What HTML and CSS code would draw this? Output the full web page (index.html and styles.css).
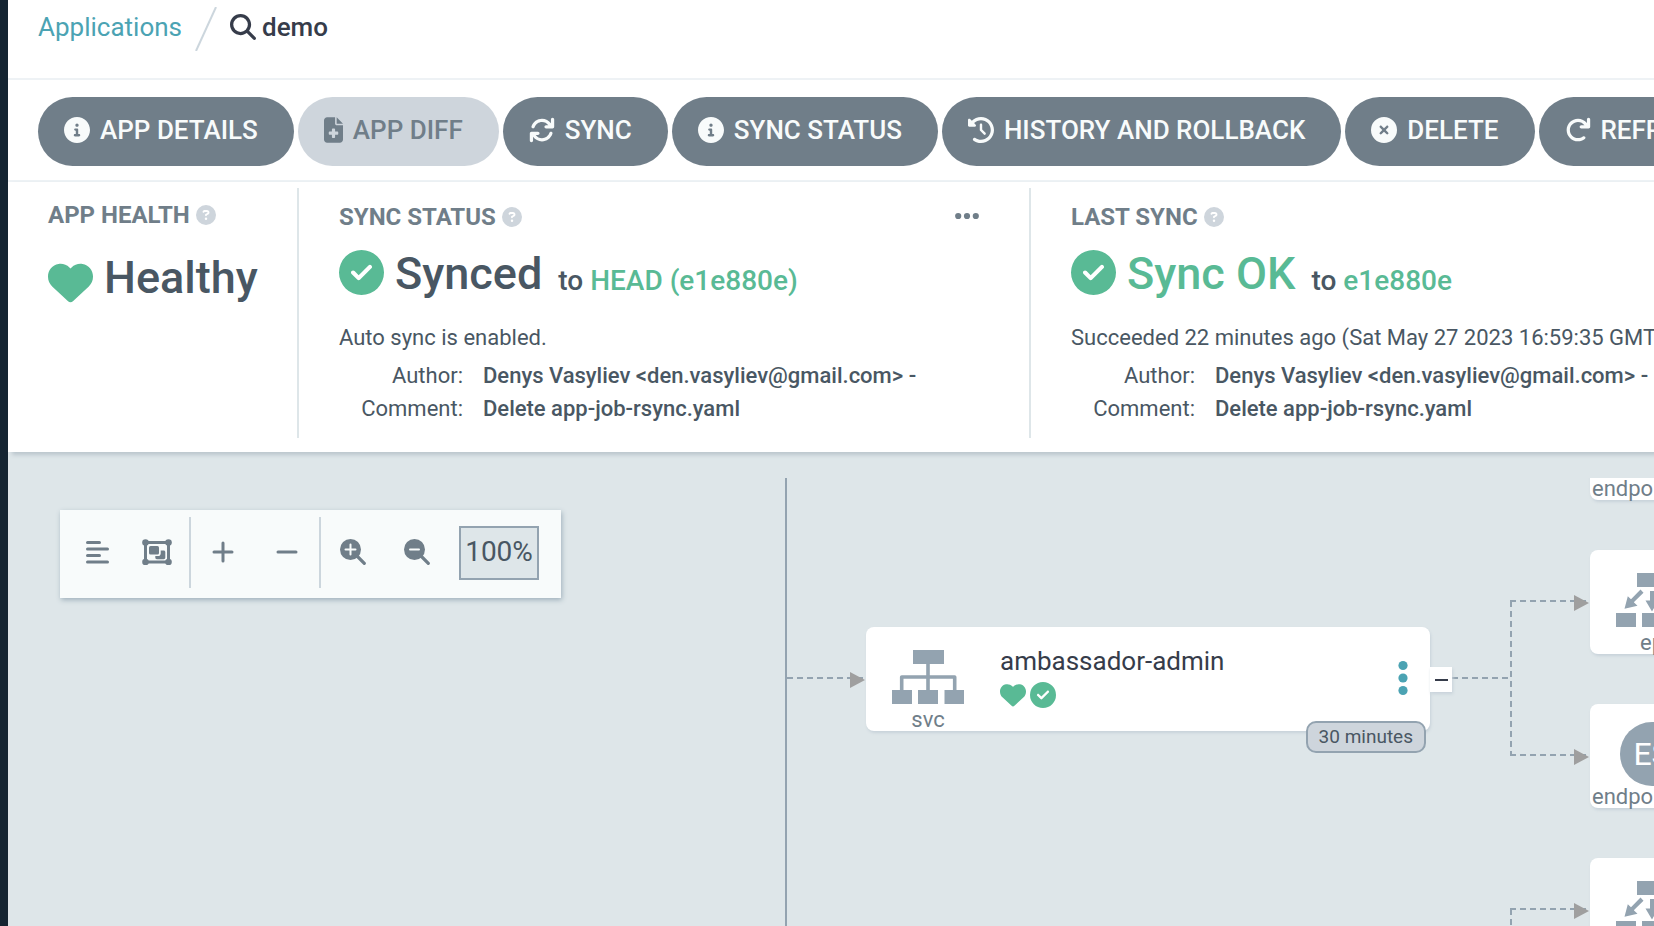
FILE: index.html
```html
<!DOCTYPE html>
<html lang="en">
<head>
<meta charset="utf-8">
<title>demo - Applications</title>
<link rel="stylesheet" href="styles.css">
</head>
<body>
<svg class="defs" aria-hidden="true">
  <symbol id="i-info" viewBox="0 0 512 512"><path d="M256 0C114.6 0 0 114.6 0 256s114.6 256 256 256s256-114.6 256-256S397.4 0 256 0zM256 128c17.67 0 32 14.33 32 32c0 17.67-14.33 32-32 32S224 177.7 224 160C224 142.3 238.3 128 256 128zM296 384h-80C202.8 384 192 373.3 192 360s10.75-24 24-24h16v-64H224c-13.25 0-24-10.75-24-24S210.8 224 224 224h32c13.25 0 24 10.75 24 24v88h16c13.25 0 24 10.75 24 24S309.3 384 296 384z"/></symbol>
  <symbol id="i-file" viewBox="0 0 384 512"><path fill-rule="evenodd" d="M64 0C28.7 0 0 28.7 0 64V448c0 35.3 28.7 64 64 64H320c35.3 0 64-28.7 64-64V160H256c-17.7 0-32-14.3-32-32V0H64zM256 0V128H384L256 0zM160 240c0-8.8 7.2-16 16-16h32c8.8 0 16 7.2 16 16v48h48c8.8 0 16 7.2 16 16v32c0 8.8-7.2 16-16 16H224v48c0 8.8-7.2 16-16 16H176c-8.8 0-16-7.2-16-16V352H112c-8.8 0-16-7.2-16-16V304c0-8.8 7.2-16 16-16h48V240z"/></symbol>
  <symbol id="i-sync" viewBox="0 0 512 512"><path d="M464 16c-17.67 0-32 14.31-32 32v74.09C392.1 66.52 327.4 32 256 32C161.5 32 78.59 92.34 49.58 182.2c-5.438 16.81 3.797 34.88 20.61 40.28c16.89 5.5 34.88-3.812 40.3-20.59C130.9 138.5 189.4 96 256 96c50.5 0 96.26 24.55 124.4 64H336c-17.67 0-32 14.31-32 32s14.33 32 32 32h128c17.67 0 32-14.31 32-32V48C496 30.31 481.7 16 464 16zM441.8 289.6c-16.92-5.438-34.88 3.812-40.3 20.59C381.1 373.5 322.6 416 256 416c-50.5 0-96.25-24.55-124.4-64H176c17.67 0 32-14.31 32-32s-14.33-32-32-32h-128c-17.67 0-32 14.31-32 32v144c0 17.69 14.33 32 32 32s32-14.31 32-32v-74.09C119.9 445.5 184.6 480 255.1 480c94.45 0 177.4-60.34 206.4-150.2C467.9 313 458.6 294.1 441.8 289.6z"/></symbol>
  <symbol id="i-history" viewBox="0 0 512 512"><path d="M75 75L41 41C25.9 25.9 0 36.6 0 57.9V168c0 13.3 10.7 24 24 24H134.1c21.4 0 32.1-25.9 17-41l-30.8-30.8C155 85.5 203 64 256 64c106 0 192 86 192 192s-86 192-192 192c-40.8 0-78.6-12.7-109.7-34.4c-14.5-10.1-34.4-6.6-44.6 7.9s-6.6 34.4 7.9 44.6C151.2 495 201.7 512 256 512c141.4 0 256-114.6 256-256S397.4 0 256 0C185.3 0 121.3 28.7 75 75zm181 53c-13.3 0-24 10.7-24 24V256c0 6.4 2.5 12.5 7 17l72 72c9.4 9.4 24.6 9.4 33.9 0s9.4-24.6 0-33.9l-65-65V152c0-13.3-10.7-24-24-24z"/></symbol>
  <symbol id="i-xmark" viewBox="0 0 512 512"><path d="M256 512A256 256 0 1 0 256 0a256 256 0 1 0 0 512zM175 175c9.4-9.4 24.6-9.4 33.9 0l47 47 47-47c9.4-9.4 24.6-9.4 33.9 0s9.4 24.6 0 33.9l-47 47 47 47c9.4 9.4 9.4 24.6 0 33.9s-24.6 9.4-33.9 0l-47-47-47 47c-9.4 9.4-24.6 9.4-33.9 0s-9.4-24.6 0-33.9l47-47-47-47c-9.4-9.4-9.4-24.6 0-33.9z"/></symbol>
  <symbol id="i-redo" viewBox="0 0 512 512"><path d="M496 48V192c0 17.69-14.31 32-32 32H320c-17.69 0-32-14.31-32-32s14.31-32 32-32h63.39c-29.97-39.7-77.25-63.78-127.6-63.78C167.7 96.22 96 167.9 96 256s71.69 159.8 159.8 159.8c34.88 0 68.03-11.03 95.88-31.94c14.22-10.53 34.22-7.75 44.81 6.375c10.59 14.16 7.75 34.22-6.375 44.81c-39.03 29.28-85.36 44.86-134.2 44.86C132.5 479.9 32 379.4 32 256s100.5-223.9 223.9-223.9c69.15 0 134 32.47 176.1 86.12V48c0-17.69 14.31-32 32-32S496 30.31 496 48z"/></symbol>
  <symbol id="i-search" viewBox="0 0 512 512"><path d="M416 208c0 45.9-14.9 88.3-40 122.7L502.6 457.4c12.5 12.5 12.5 32.8 0 45.3s-32.8 12.5-45.3 0L330.7 376c-34.4 25.2-76.8 40-122.7 40C93.1 416 0 322.9 0 208S93.1 0 208 0S416 93.1 416 208zM208 352a144 144 0 1 0 0-288 144 144 0 1 0 0 288z"/></symbol>
  <symbol id="i-question" viewBox="0 0 512 512"><path d="M256 512A256 256 0 1 0 256 0a256 256 0 1 0 0 512zM169.8 165.3c7.9-22.3 29.1-37.3 52.8-37.3h58.3c34.9 0 63.1 28.3 63.1 63.1c0 22.6-12.1 43.5-31.7 54.8L280 264.4c-.2 13-10.9 23.6-24 23.6c-13.3 0-24-10.7-24-24V250.5c0-8.6 4.6-16.5 12.1-20.8l44.3-25.4c4.7-2.7 7.6-7.7 7.6-13.1c0-8.4-6.8-15.1-15.1-15.1H222.6c-3.4 0-6.4 2.1-7.5 5.3l-.4 1.2c-4.4 12.5-18.2 19-30.6 14.6s-19-18.2-14.6-30.6l.4-1.2zM224 352a32 32 0 1 1 64 0 32 32 0 1 1 -64 0z"/></symbol>
  <symbol id="i-check" viewBox="0 0 512 512"><path d="M256 512A256 256 0 1 0 256 0a256 256 0 1 0 0 512zM369 209L241 337c-9.4 9.4-24.6 9.4-33.9 0l-64-64c-9.4-9.4-9.4-24.6 0-33.9s24.6-9.4 33.9 0l47 47L335 175c9.4-9.4 24.6-9.4 33.9 0s9.4 24.6 0 33.9z"/></symbol>
  <symbol id="i-heart" viewBox="0 0 512 512"><path d="M47.6 300.4L228.3 469.1c7.5 7 17.4 10.9 27.7 10.9s20.2-3.9 27.7-10.9L464.4 300.4c30.4-28.3 47.6-68 47.6-109.5v-5.8c0-69.9-50.5-129.5-119.4-141C347 36.5 300.6 51.4 268 84L256 96 244 84c-32.6-32.6-79-47.5-124.6-39.9C50.5 55.6 0 115.2 0 185.1v5.8c0 41.5 17.2 81.2 47.6 109.5z"/></symbol>
  <symbol id="i-align" viewBox="0 0 24 26"><path fill="none" stroke="currentColor" stroke-width="3" stroke-linecap="round" d="M2.5 3.5h12M2.5 10h20M2.5 16.500h12M2.500 23h20"/></symbol>
  <symbol id="i-group" viewBox="0 0 30 26"><path fill="none" stroke="currentColor" stroke-width="3" d="M3.500 3.500h23v19.500h-23z"/><g><circle cx="3.500" cy="3.500" r="3.300"/><circle cx="26.500" cy="3.500" r="3.300"/><circle cx="3.500" cy="23" r="3.300"/><circle cx="26.500" cy="23" r="3.300"/><rect x="7" y="7" width="10" height="8.500" rx="1.600"/><path d="M18.700 11.500h3c.9 0 1.600.7 1.600 1.600v5.500c0 .9-.7 1.600-1.600 1.600h-6.800c-.9 0-1.600-.7-1.600-1.600v-1.500h2.700c1.500 0 2.700-1.200 2.700-2.700z"/></g></symbol>
  <symbol id="i-plus" viewBox="0 0 24 24"><path fill="none" stroke="currentColor" stroke-width="3" stroke-linecap="round" d="M12 3v18M3 12h18"/></symbol>
  <symbol id="i-minus" viewBox="0 0 24 24"><path fill="none" stroke="currentColor" stroke-width="3" stroke-linecap="round" d="M3 12h18"/></symbol>
  <symbol id="i-zoomin" viewBox="0 0 26 26"><circle cx="10.500" cy="10.500" r="10.500"/><path fill="none" stroke="currentColor" stroke-width="3.200" stroke-linecap="round" d="M16 16l8.300 8.300"/><path class="knock" d="M10.500 5.500v10M5.500 10.500h10"/></symbol>
  <symbol id="i-zoomout" viewBox="0 0 26 26"><circle cx="10.500" cy="10.500" r="10.500"/><path fill="none" stroke="currentColor" stroke-width="3.200" stroke-linecap="round" d="M16 16l8.300 8.300"/><path class="knock" d="M6 10.500h9"/></symbol>
  <symbol id="i-dots" viewBox="0 0 24 8"><circle cx="3.200" cy="4" r="3.100"/><circle cx="12" cy="4" r="3.100"/><circle cx="20.800" cy="4" r="3.100"/></symbol>
  <symbol id="i-kebab" viewBox="0 0 10 36"><circle cx="5" cy="5.500" r="4.600"/><circle cx="5" cy="18" r="4.600"/><circle cx="5" cy="30.500" r="4.600"/></symbol>
  <symbol id="i-svc" viewBox="0 0 72 54"><path d="M21 0h31v14h-31zM0 40h20v14h-20zM26 40h20v14h-20zM52.500 40h19.500v14h-19.500z"/><path fill="none" stroke="currentColor" stroke-width="3.600" stroke-linejoin="round" d="M36 13v28M9.700 41v-14h53v14"/></symbol>
  <symbol id="i-ep" viewBox="0 0 72 54"><path d="M21 0h31v14h-31zM0 40h20v14h-20zM26 40h20v14h-20zM52.500 40h19.500v14h-19.500z"/><path d="M24.500 16.500l3 3.200-9.700 9.500 3.700 3.600-13 3 3.300-12.500 3.200 3zM34 18h4v9.500h4.500l-6.500 11-6.500-11h4.500zM47.500 16.500l-3 3.200 9.700 9.500-3.700 3.600 13 3-3.300-12.500-3.200 3z"/></symbol>
</svg>
<div class="app">
  <nav class="sidebar" aria-label="Main"></nav>
  <main class="page">
    <header class="crumbs">
      <a class="crumb-link" href="#">Applications</a>
      <svg class="slash" viewBox="0 0 22 44"><path d="M1 44L21 0"/></svg>
      <svg class="icon"><use href="#i-search"/></svg>
      <span class="crumb-current">demo</span>
    </header>
    <div class="actions">
      <button class="btn"><svg class="icon"><use href="#i-info"/></svg>APP DETAILS</button>
      <button class="btn btn-disabled" disabled><svg class="icon icon-file"><use href="#i-file"/></svg>APP DIFF</button>
      <button class="btn"><svg class="icon"><use href="#i-sync"/></svg>SYNC</button>
      <button class="btn"><svg class="icon"><use href="#i-info"/></svg>SYNC STATUS</button>
      <button class="btn"><svg class="icon"><use href="#i-history"/></svg>HISTORY AND ROLLBACK</button>
      <button class="btn"><svg class="icon"><use href="#i-xmark"/></svg>DELETE</button>
      <button class="btn"><svg class="icon"><use href="#i-redo"/></svg>REFRESH</button>
    </div>
    <div class="status">
      <section class="panel panel-health">
        <div class="panel-head">
          <h2 class="label">APP HEALTH <svg class="help"><use href="#i-question"/></svg></h2>
        </div>
        <div class="value"><svg class="big-icon big-heart"><use href="#i-heart"/></svg><span class="big">Healthy</span></div>
      </section>
      <section class="panel panel-sync">
        <div class="panel-head">
          <h2 class="label">SYNC STATUS <svg class="help"><use href="#i-question"/></svg></h2>
          <button class="more" aria-label="More"><svg class="more-icon"><use href="#i-dots"/></svg></button>
        </div>
        <div class="value"><svg class="big-icon"><use href="#i-check"/></svg><span class="big">Synced</span><span class="rev">to <a href="#">HEAD (e1e880e)</a></span></div>
        <p class="note">Auto sync is enabled.</p>
        <dl class="meta">
          <dt>Author:</dt><dd>Denys Vasyliev &lt;den.vasyliev@gmail.com&gt; -</dd>
          <dt>Comment:</dt><dd>Delete app-job-rsync.yaml</dd>
        </dl>
      </section>
      <section class="panel panel-last">
        <div class="panel-head">
          <h2 class="label">LAST SYNC <svg class="help"><use href="#i-question"/></svg></h2>
        </div>
        <div class="value"><svg class="big-icon"><use href="#i-check"/></svg><span class="big ok">Sync OK</span><span class="rev">to <a href="#">e1e880e</a></span></div>
        <p class="note">Succeeded 22 minutes ago (Sat May 27 2023 16:59:35 GMT+0200)</p>
        <dl class="meta">
          <dt>Author:</dt><dd>Denys Vasyliev &lt;den.vasyliev@gmail.com&gt; -</dd>
          <dt>Comment:</dt><dd>Delete app-job-rsync.yaml</dd>
        </dl>
      </section>
    </div>
    <div class="tree">
      <div class="tools">
        <div class="tool-group">
          <button class="tool" aria-label="Compact"><svg class="t-align"><use href="#i-align"/></svg></button>
          <button class="tool" aria-label="Group nodes"><svg class="t-group"><use href="#i-group"/></svg></button>
        </div>
        <div class="tool-group">
          <button class="tool" aria-label="Expand all"><svg class="t-sign"><use href="#i-plus"/></svg></button>
          <button class="tool" aria-label="Collapse all"><svg class="t-sign"><use href="#i-minus"/></svg></button>
        </div>
        <div class="tool-group">
          <button class="tool" aria-label="Zoom in"><svg class="t-zoom"><use href="#i-zoomin"/></svg></button>
          <button class="tool" aria-label="Zoom out"><svg class="t-zoom"><use href="#i-zoomout"/></svg></button>
          <input class="zoom-value" type="text" value="100%" aria-label="Zoom">
        </div>
      </div>
      <div class="graph">
        <svg class="edges" aria-hidden="true">
          <path class="solid" d="M778 0V448"/>
          <path class="dash" d="M779 200H858M1444 200H1503M1503 123V277M1502 123H1582M1502 277H1582M1502 431H1582M1503 431V460"/>
          <path class="arrow" d="M842 194l15 8-15 8zM1566 117l15 8-15 8zM1566 271l15 8-15 8zM1566 425l15 8-15 8z"/>
        </svg>
        <article class="node node-svc">
          <div class="kind"><svg class="kind-icon"><use href="#i-svc"/></svg><span>svc</span></div>
          <div class="info"><span class="name">ambassador-admin</span><span class="marks"><svg class="mark"><use href="#i-heart"/></svg><svg class="mark"><use href="#i-check"/></svg></span></div>
          <button class="kebab" aria-label="Node menu"><svg class="kebab-icon"><use href="#i-kebab"/></svg></button>
          <button class="collapse" aria-label="Collapse"><span class="bar"></span></button>
          <span class="age">30 minutes</span>
        </article>
        <article class="node node-a"><div class="kind"><span class="wide">endpointslice</span></div></article>
        <article class="node node-b"><div class="kind"><svg class="kind-icon"><use href="#i-ep"/></svg><span>ep</span></div></article>
        <article class="node node-c"><div class="kind"><span class="badge">ES</span><span class="wide">endpointslice</span></div></article>
        <article class="node node-d"><div class="kind"><svg class="kind-icon"><use href="#i-ep"/></svg><span>ep</span></div></article>
      </div>
    </div>
  </main>
</div>
</body>
</html>
```
FILE: styles.css
```css
* { box-sizing: border-box; }
body { margin: 0; background: #fff; color: #495763; font-family: Roboto, "Liberation Sans", sans-serif; font-size: 22px; overflow: hidden; }
button { border: 0; padding: 0; background: none; font: inherit; color: inherit; cursor: pointer; }
a { color: inherit; text-decoration: none; }
svg { display: block; flex: none; fill: currentColor; }
.defs { position: absolute; width: 0; height: 0; }

.app { display: flex; height: 100vh; overflow: hidden; }
.sidebar { flex: none; position: relative; z-index: 2; width: 8px; background: #152532; }
.page { flex: 1; min-width: 0; display: flex; flex-direction: column; }

.crumbs { flex: none; display: flex; align-items: center; height: 80px; padding: 0 30px 24px; border-bottom: 2px solid #eef2f5; font-size: 26px; line-height: 32px; white-space: nowrap; }
.crumb-link { color: #4ba3b3; }
.slash { width: 22px; height: 44px; margin: 4px 13px 0; fill: none; stroke: #ccd6dd; stroke-width: 2; }
.crumb-current { margin-left: 6px; color: #363c4a; font-weight: 500; }
.crumbs .icon { color: #363c4a; }
.icon { width: 26px; height: 26px; }
.icon-file { width: 19px; }

.actions { flex: none; display: flex; gap: 4px; height: 102px; padding: 17px 30px 14px; border-bottom: 2px solid #eef2f5; overflow: hidden; }
.btn { flex: none; display: flex; align-items: center; gap: 10px; height: 69px; padding: 0 36px 4px 26px; border-radius: 35px; background: #707e89; color: #f8fbfb; font-size: 26px; font-weight: 500; white-space: nowrap; }
.btn-disabled { background: #ced5dc; color: #707e89; }

.status { flex: none; position: relative; z-index: 1; display: flex; height: 270px; padding: 6px 0 14px; background: #fff; box-shadow: 4px 3px 4px #bbc6cd; overflow: hidden; }
.panel { flex: none; display: flex; flex-direction: column; white-space: nowrap; }
.panel + .panel { border-left: 2px solid #dee6e9; padding: 2px 40px 0; }
.panel-health { width: 289px; padding-left: 40px; }
.panel-sync { width: 732px; }
.panel-head { display: flex; justify-content: space-between; align-items: center; padding-top: 12px; }
.label { display: flex; align-items: center; gap: 6px; margin: 0; font-size: 24px; line-height: 30px; font-weight: 700; color: #707e89; }
.help { width: 20px; height: 20px; color: #ced5dc; }
.more { padding: 8px 10px 10px; color: #707e89; }
.more-icon { width: 24px; height: 8px; }
.value { display: flex; align-items: center; gap: 11px; height: 58px; margin-top: 13px; }
.panel-health .value { margin-top: 19px; }
.big-icon { width: 45px; height: 45px; margin-bottom: 4px; color: #59ba95; }
.big-heart { margin: 8px 0 0; }
.big { font-size: 45px; line-height: 58px; font-weight: 500; }
.ok, .rev a { color: #59ba95; }
.rev { align-self: flex-end; margin-left: 5px; font-size: 28px; line-height: 44px; font-weight: 500; }
.note { margin: 19px 0 0; line-height: 32px; }
.meta { display: grid; grid-template-columns: 124px auto; column-gap: 20px; justify-content: start; margin: 5px 0 0; line-height: 33px; }
.meta dt { text-align: right; }
.meta dd { margin: 0; font-weight: 500; }

.tree { flex: 1; min-height: 0; position: relative; padding-top: 26px; background: #dee6e9; }
.graph { position: relative; height: 100%; overflow: hidden; }
.edges { position: absolute; width: 100%; height: 100%; }
.edges path { stroke: #93a3b0; stroke-width: 2; fill: none; }
.edges .dash { stroke-dasharray: 6 4; }
.edges .arrow { stroke: none; fill: #9f9f9f; }

.tools { position: absolute; z-index: 1; left: 52px; top: 58px; display: flex; height: 88px; padding: 7px 22px 10px 7px; background: #f8fbfb; color: #707e89; box-shadow: 1px 2px 5px #9fb0bb; }
.tool-group { display: flex; align-items: center; padding-right: 2px; }
.tool-group + .tool-group { padding-right: 0; border-left: 2px solid #ccd6dd; }
.tool { display: grid; place-items: center; width: 60px; height: 60px; padding-bottom: 2px; }
.tool-group + .tool-group .tool { width: 64px; }
.t-align { width: 24px; height: 26px; }
.t-group { width: 30px; height: 26px; }
.t-sign { width: 24px; height: 24px; }
.t-zoom { width: 26px; height: 26px; }
.knock { fill: none; stroke: #f8fbfb; stroke-width: 2; stroke-linecap: round; }
.zoom-value { width: 80px; height: 54px; margin-left: 10px; padding: 0 0 2px; border: 2px solid #93a3b0; border-radius: 0; background: #dee6e9; color: #495763; font: 28px Roboto, "Liberation Sans", sans-serif; text-align: center; }

.node { position: absolute; display: flex; width: 564px; height: 104px; border-radius: 8px; background: #fff; box-shadow: 1px 2px 3px #c8d2da; }
.node-svc { left: 858px; top: 149px; }
.node-a { left: 1582px; top: -82px; }
.node-b { left: 1582px; top: 72px; }
.node-c { left: 1582px; top: 226px; }
.node-d { left: 1582px; top: 380px; }
.kind { display: flex; flex-direction: column; align-items: center; justify-content: flex-end; width: 124px; color: #707e89; line-height: 22px; }
.kind-icon { width: 72px; height: 54px; margin-bottom: 5px; color: #93a3b0; }
.wide { align-self: flex-start; padding-left: 2px; }
.badge { display: grid; place-items: center; width: 64px; height: 64px; border-radius: 50%; background: #93a3b0; color: #fff; font-size: 32px; }
.info { display: flex; flex-direction: column; gap: 5px; flex: 1; padding: 18px 0 0 10px; }
.name { font-size: 26px; line-height: 32px; color: #363c4a; }
.marks { display: flex; gap: 4px; color: #59ba95; }
.mark { width: 26px; height: 26px; }
.kebab { margin-right: 22px; padding-bottom: 2px; color: #4ba3b3; }
.kebab-icon { width: 10px; height: 36px; }
.collapse { position: absolute; left: 564px; top: 40px; display: grid; place-items: center; width: 22px; height: 25px; background: #fff; box-shadow: 1px 2px 3px #c8d2da; }
.bar { width: 13px; height: 2px; background: #363c4a; }
.age { position: absolute; right: 4px; bottom: -22px; padding: 0 11px; border: 2px solid #93a3b0; border-radius: 10px; background: #ced5dc; font-size: 19px; line-height: 28px; }
```
